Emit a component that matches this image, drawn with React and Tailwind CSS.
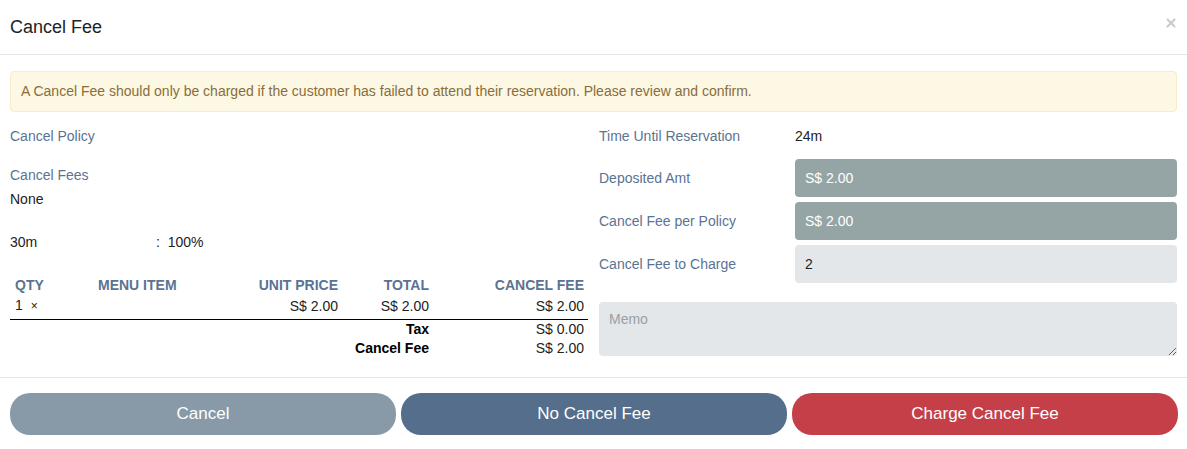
import { X } from 'lucide-react';

function Label({ children }) {
  return <div className="text-[14px] leading-[20px] text-[#5b7393]">{children}</div>;
}

function FieldRow({ label, children }) {
  return (
    <div className="flex items-center">
      <div className="w-[196px] shrink-0">
        <Label>{label}</Label>
      </div>
      <div className="flex-1">{children}</div>
    </div>
  );
}

function ItemsTable() {
  return (
    <table className="w-full text-[14px] border-collapse">
      <thead>
        <tr className="text-[#5b7393]">
          <th className="text-left font-bold pl-[5px] w-[88px] leading-[20px]">QTY</th>
          <th className="text-left font-bold leading-[20px]">MENU ITEM</th>
          <th className="text-right font-bold w-[110px] leading-[20px]">UNIT PRICE</th>
          <th className="text-right font-bold w-[91px] leading-[20px]">TOTAL</th>
          <th className="text-right font-bold w-[159px] pr-[4px] leading-[20px]">CANCEL FEE</th>
        </tr>
      </thead>
      <tbody className="text-[#222]">
        <tr className="border-b border-black">
          <td className="pl-[5px] leading-[20px] pb-[3px]">1 <span className="ml-1 text-[12px]">×</span></td>
          <td />
          <td className="text-right leading-[20px] pb-[3px]">S$ 2.00</td>
          <td className="text-right leading-[20px] pb-[3px]">S$ 2.00</td>
          <td className="text-right pr-[4px] leading-[20px] pb-[3px]">S$ 2.00</td>
        </tr>
        <tr>
          <td colSpan={4} className="text-right font-bold text-black leading-[19px]">Tax</td>
          <td className="text-right pr-[4px] leading-[19px]">S$ 0.00</td>
        </tr>
        <tr>
          <td colSpan={4} className="text-right font-bold text-black leading-[19px]">Cancel Fee</td>
          <td className="text-right pr-[4px] leading-[19px]">S$ 2.00</td>
        </tr>
      </tbody>
    </table>
  );
}

export default function App() {
  return (
    <div className="w-[1187px] h-[449px] bg-white font-['Liberation_Sans',Arial,sans-serif] text-[#222]">
      {/* Header */}
      <div className="flex items-center justify-between h-[55px] pl-[10px] pr-[9px] border-b border-[#e5e5e5]">
        <h4 className="text-[18px] text-[#222] pt-[1px]">Cancel Fee</h4>
        <X size={14} strokeWidth={3.5} className="text-[#cacaca] -mt-[8px]" />
      </div>

      {/* Body */}
      <div className="px-[10px] pt-[16px]">
        <div className="h-[41px] flex items-center px-[10px] rounded-[4px] bg-[#fcf8e3] border border-[#faebcc] text-[14px] text-[#8a6d3b]">
          A Cancel Fee should only be charged if the customer has failed to attend their reservation. Please review and confirm.
        </div>

        <div className="flex gap-[11px] pt-[14px]">
          {/* Left column */}
          <div className="w-[578px]">
            <Label>Cancel Policy</Label>
            <div className="mt-[19px]">
              <Label>Cancel Fees</Label>
            </div>
            <div className="text-[14px] leading-[20px] mt-[4px]">None</div>
            <div className="flex text-[14px] leading-[20px] mt-[23px]">
              <span className="w-[146px]">30m</span>
              <span>:&nbsp;&nbsp;100%</span>
            </div>
            <div className="mt-[23px]">
              <ItemsTable />
            </div>
          </div>

          {/* Right column */}
          <div className="flex-1 flex flex-col gap-[5px]">
            <FieldRow label="Time Until Reservation">
              <div className="text-[14px] leading-[20px]">24m</div>
            </FieldRow>
            <div className="mt-[8px]">
              <FieldRow label="Deposited Amt">
                <div className="h-[38px] rounded-[4px] bg-[#95a5a6] text-white text-[14px] flex items-center px-[10px]">S$ 2.00</div>
              </FieldRow>
            </div>
            <FieldRow label="Cancel Fee per Policy">
              <div className="h-[38px] rounded-[4px] bg-[#95a5a6] text-white text-[14px] flex items-center px-[10px]">S$ 2.00</div>
            </FieldRow>
            <FieldRow label="Cancel Fee to Charge">
              <input
                readOnly
                value="2"
                className="w-full h-[38px] rounded-[4px] bg-[#e3e7ea] text-[14px] text-[#222] px-[10px] outline-none"
              />
            </FieldRow>
            <textarea
              placeholder="Memo"
              className="mt-[14px] w-full h-[54px] rounded-[4px] bg-[#e3e7ea] text-[14px] px-[10px] py-[7px] placeholder:text-[#9aa0a4] outline-none block"
            />
          </div>
        </div>
      </div>

      {/* Footer */}
      <div className="mt-[19px] border-t border-[#e5e5e5] flex gap-[5px] pl-[10px] pr-[9px] pt-[15px]">
        <button className="flex-1 h-[42px] rounded-[20px] bg-[#889aa8] text-white text-[17px]">Cancel</button>
        <button className="flex-1 h-[42px] rounded-[20px] bg-[#546e8c] text-white text-[17px]">No Cancel Fee</button>
        <button className="flex-1 h-[42px] rounded-[20px] bg-[#c53f48] text-white text-[17px]">Charge Cancel Fee</button>
      </div>
    </div>
  );
}
